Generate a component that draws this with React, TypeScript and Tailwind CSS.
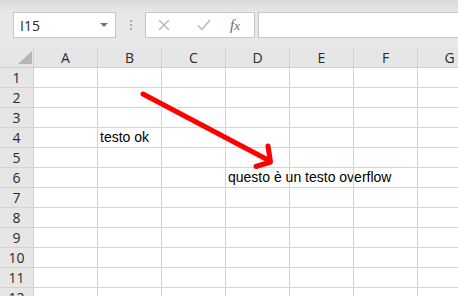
import { Fragment } from 'react';

const columns = ['A', 'B', 'C', 'D', 'E', 'F', 'G'];
const rows = [1, 2, 3, 4, 5, 6, 7, 8, 9, 10, 11, 12];

const cells: Record<string, string> = {
  B4: 'testo ok',
  D6: 'questo è un testo overflow',
};

const uiFont = "font-['Open_Sans','Noto_Sans',sans-serif]";

function FormulaBar() {
  return (
    <div className="flex h-[48px] items-start bg-[#e6e6e6] bg-gradient-to-b from-[#dadada] from-0% to-[#e8e8e8] to-[25%] pt-[12px]">
      <div className="ml-[13px] flex h-[26px] w-[103px] items-center justify-between border border-[#c6c6c6] bg-white pl-[6px] pr-[7px]">
        <span className={`${uiFont} text-[14px] text-[#2a2a2a]`}>I15</span>
        <span className="h-0 w-0 border-x-[4px] border-t-[4px] border-x-transparent border-t-[#707070]" />
      </div>
      <div className="flex h-[26px] w-[29px] flex-col items-center justify-center gap-[2px]">
        <span className="h-[2px] w-[2px] bg-[#a8a8a8]" />
        <span className="h-[2px] w-[2px] bg-[#a8a8a8]" />
        <span className="h-[2px] w-[2px] bg-[#a8a8a8]" />
      </div>
      <div className="flex h-[26px] w-[110px] items-center border border-[#c6c6c6] bg-white">
        <svg width="12" height="12" viewBox="0 0 12 12" className="ml-[12px]">
          <path d="M1 1 L11 11 M11 1 L1 11" stroke="#b8b8b8" strokeWidth="1.4" />
        </svg>
        <svg width="14" height="12" viewBox="0 0 14 12" className="ml-[27px]">
          <path d="M1 6.5 L5 10.5 L13 1" stroke="#b8b8b8" strokeWidth="1.5" fill="none" />
        </svg>
        <span className="ml-[19px] font-['Liberation_Serif',serif] text-[15px] italic text-[#6a6a6a]">
          f<span className="text-[13px]">x</span>
        </span>
      </div>
      <div className="ml-[3px] h-[26px] flex-1 border border-r-0 border-[#c6c6c6] bg-white" />
    </div>
  );
}

export default function App() {
  return (
    <div className="relative h-[296px] w-[458px] overflow-hidden bg-white">
      <FormulaBar />
      <div className="flex h-[20px] border-b border-[#cfcfcf] bg-[#e6e6e6]">
        <div className="flex w-[34px] shrink-0 items-end justify-end border-r border-[#cfcfcf] pb-[3px] pr-[1px]">
          <span className="h-0 w-0 border-b-[13px] border-l-[14px] border-b-[#b5b5b5] border-l-transparent" />
        </div>
        {columns.map((col) => (
          <div
            key={col}
            className={`${uiFont} flex w-[64px] shrink-0 items-center justify-center border-r border-[#cfcfcf] text-[14px] leading-none text-[#2a2a2a]`}
          >
            {col}
          </div>
        ))}
      </div>
      {rows.map((row) => (
        <div key={row} className="flex h-[20px] border-b border-[#d4d4d4]">
          <div
            className={`${uiFont} flex w-[34px] shrink-0 items-center justify-center border-r border-[#cfcfcf] bg-[#e6e6e6] text-[14px] leading-none text-[#2a2a2a]`}
          >
            {row}
          </div>
          {columns.map((col) => (
            <Fragment key={col}>
              <div className="relative w-[64px] shrink-0 border-r border-[#d4d4d4]">
                {cells[`${col}${row}`] ? (
                  <span className="absolute bottom-[0px] left-[2px] whitespace-nowrap font-['Liberation_Sans',Arial,sans-serif] text-[14px] leading-[19px] text-black">
                    {cells[`${col}${row}`]}
                  </span>
                ) : null}
              </div>
            </Fragment>
          ))}
        </div>
      ))}
      <svg className="pointer-events-none absolute left-0 top-0" width="458" height="296" viewBox="0 0 458 296">
        <path
          d="M143 94 L270 161 M268 146 L270.5 162 L256 166.5"
          stroke="#ff0000"
          strokeWidth="5"
          strokeLinecap="round"
          strokeLinejoin="round"
          fill="none"
        />
      </svg>
    </div>
  );
}
